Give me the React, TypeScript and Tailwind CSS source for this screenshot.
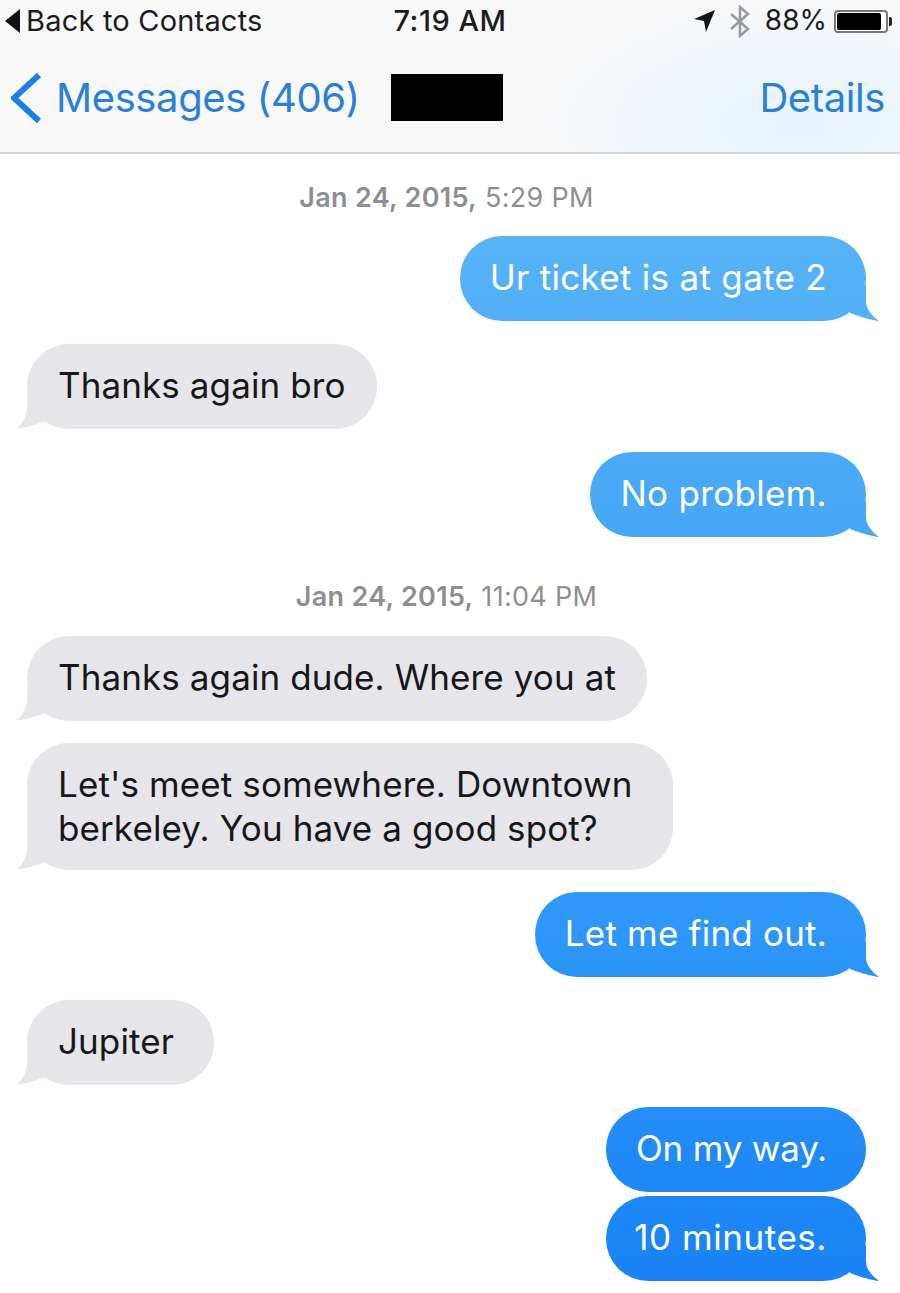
const font = "font-['Inter','Liberation_Sans',sans-serif]";

function SentTail({ color }: { color: string }) {
  return (
    <svg className="absolute right-[-14px] bottom-0 h-[36px] w-[40px]" viewBox="0 0 40 36">
      <path d="M26 0 V16 C26 24 32 31 39 36 C33 35.5 20 32 10 28 L6 8 Z" fill={color} />
    </svg>
  );
}

function ReceivedTail() {
  return (
    <svg className="absolute left-[-10px] bottom-0 h-[36px] w-[40px]" viewBox="0 0 40 36">
      <path d="M10 0 V14 C10 22 6 30 0 35 C8 35 18 32 28 28 L30 8 Z" fill="#e5e5ea" />
    </svg>
  );
}

function Sent({ text, mt, tail, size = "pl-[30px] tracking-[0.3px]" }: { text: string; mt: string; tail?: string; size?: string }) {
  return (
    <div className={`relative self-end ${mt} text-white`}>
      {tail && <SentTail color={tail} />}
      <div className={`relative h-[85px] rounded-[42px] bg-gradient-to-b from-[#64bcf4] via-[#2f98f8] via-70% to-[#1982f6] bg-fixed ${size} pr-[39px] text-right text-[35px] leading-[83px]`}>
        {text}
      </div>
    </div>
  );
}

function Received({ lines, mt, pr = "pr-[31px]" }: { lines: string[]; mt: string; pr?: string }) {
  return (
    <div className={`relative self-start ${mt}`}>
      <ReceivedTail />
      <div className={`relative rounded-[42px] bg-[#e5e5ea] pl-[31px] ${pr} text-[35px] leading-[44px] tracking-[0.1px] text-[#17171a] ${lines.length > 1 ? "pt-[19px] pb-[20px]" : "pt-[19px] pb-[22px]"}`}>
        {lines.map((line) => (
          <div key={line} className="whitespace-nowrap">{line}</div>
        ))}
      </div>
    </div>
  );
}

function Stamp({ date, time, mt }: { date: string; time: string; mt: string }) {
  return (
    <div className={`${mt} self-center text-[27px] leading-[32px] tracking-[0.3px] text-[#8e8e93]`}>
      <span className="font-semibold">{date}</span> {time}
    </div>
  );
}

export default function App() {
  return (
    <div className={`${font} h-[1293px] w-[900px] overflow-hidden bg-white`}>
      <header className="h-[154px] border-b-2 border-[#d6d6d8] bg-[radial-gradient(ellipse_260px_130px_at_800px_125px,#e6f3fd,#f8f8f9)]">
        <div className="grid h-[42px] grid-cols-3 items-center text-[29px] leading-none text-[#1c1c1e]">
          <div className="flex items-center whitespace-nowrap pl-[5px]">
            <svg className="h-[24px] w-[15px] shrink-0" viewBox="0 0 15 24">
              <path d="M15 0 V24 L0 12 Z" fill="#111" />
            </svg>
            <span className="ml-[6px] pb-[2px] tracking-[0.2px]">Back to Contacts</span>
          </div>
          <div className="pb-[2px] text-center font-medium tracking-[0.5px]">7:19 AM</div>
          <div className="flex items-center justify-end pr-[8px]">
            <svg className="h-[24px] w-[22px]" viewBox="0 0 22 24">
              <path d="M21 1 L12 23 L10 12 L0 10 Z" fill="#151515" />
            </svg>
            <svg className="ml-[14px] h-[33px] w-[20px]" viewBox="0 0 20 33" fill="none" stroke="#9a9a9c" strokeWidth="2.5">
              <path d="M1 9 L18 24 L10 31 V2 L18 9 L1 24" />
            </svg>
            <span className="ml-[15px] pb-[2px] text-[28px]">88%</span>
            <div className="ml-[7px] flex items-center">
              <div className="h-[23px] w-[54px] rounded-[4px] border-2 border-[#77777a] bg-white p-[1px] pr-[5px]">
                <div className="h-full w-full rounded-[2px] bg-black" />
              </div>
              <div className="ml-[1px] h-[9px] w-[3px] rounded-r-[2px] bg-[#222]" />
            </div>
          </div>
        </div>
        <nav className="flex h-[110px] items-center pt-[2px] text-[40px] text-[#2a80d8]">
          <svg className="ml-[11px] h-[52px] w-[32px]" viewBox="0 0 32 52" fill="none" stroke="#1b7fe8" strokeWidth="6">
            <path d="M28 3 L3 26 L28 49" />
          </svg>
          <span className="ml-[13px] tracking-[-0.4px]">Messages (406)</span>
          <div className="ml-[31px] mt-[-2px] h-[47px] w-[112px] bg-black" />
          <span className="ml-auto pr-[15px] tracking-[-0.4px]">Details</span>
        </nav>
      </header>

      <main className="flex flex-col pl-[27px] pr-[34px]">
        <Stamp date="Jan 24, 2015," time="5:29 PM" mt="mt-[28px]" />
        <Sent text="Ur ticket is at gate 2" mt="mt-[22px]" tail="#52b0f5" />
        <Received lines={["Thanks again bro"]} mt="mt-[23px]" />
        <Sent text="No problem." mt="mt-[23px]" tail="#46a7f6" />
        <Stamp date="Jan 24, 2015," time="11:04 PM" mt="mt-[44px]" />
        <Received lines={["Thanks again dude. Where you at"]} mt="mt-[23px]" />
        <Received lines={["Let's meet somewhere. Downtown", "berkeley. You have a good spot?"]} mt="mt-[22px]" pr="pr-[40px]" />
        <Sent text="Let me find out." mt="mt-[22px]" tail="#2c95f8" size="pl-[30px] tracking-[0.2px]" />
        <Received lines={["Jupiter"]} mt="mt-[23px]" pr="pr-[40px]" />
        <Sent text="On my way." mt="mt-[22px]" size="w-[260px] tracking-[-0.2px]" />
        <Sent text="10 minutes." mt="mt-[4px]" tail="#1b84f6" size="w-[260px] tracking-[0.55px]" />
      </main>
    </div>
  );
}
